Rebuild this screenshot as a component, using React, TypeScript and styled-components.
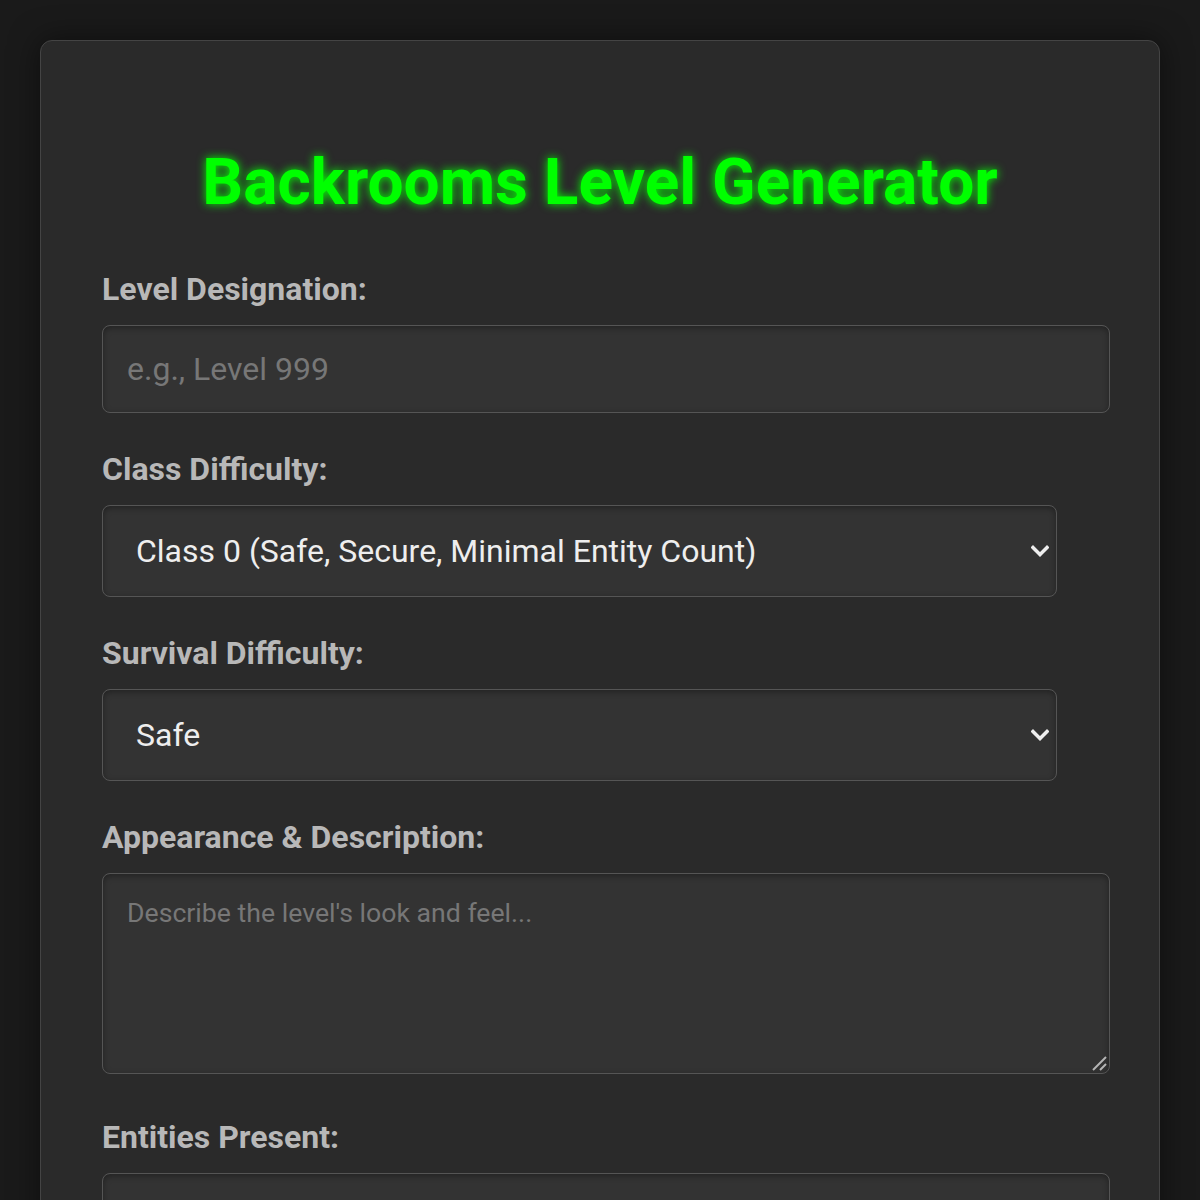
import React from "react";
import styled, { createGlobalStyle } from "styled-components";

const Global = createGlobalStyle`
  html, body {
    margin: 0;
    padding: 0;
    background: #1a1a1a;
    font-family: Roboto, "Liberation Sans", Arial, sans-serif;
  }
  * { box-sizing: border-box; }
`;

const Page = styled.div`
  padding: 40px;
  min-height: 1200px;
`;

const Panel = styled.div`
  background: #2a2a2a;
  border: 1px solid #444;
  border-radius: 12px;
  padding: 61px 61px 80px;
  box-shadow: 0 0 30px rgba(0, 0, 0, 0.5);
  display: flex;
  flex-direction: column;
`;

const Title = styled.h1`
  margin: 43px 0 51px;
  font-size: 64px;
  font-weight: 700;
  line-height: 75px;
  text-align: center;
  color: #00ff00;
  text-shadow: 0 0 10px #00ff00;
`;

const Group = styled.div`
  display: flex;
  flex-direction: column;
  align-items: flex-start;
  margin-bottom: 38px;
`;

const Label = styled.label`
  display: block;
  font-size: 32px;
  line-height: 37px;
  font-weight: 700;
  color: #b8b8b8;
  margin-bottom: 17px;
`;

const fieldBase = `
  background: #333;
  border: 1px solid #555;
  border-radius: 8px;
  color: #eee;
  font-family: Roboto, "Liberation Sans", Arial, sans-serif;
  box-shadow: inset 0 2px 6px rgba(0, 0, 0, 0.35);
  outline: none;
  &::placeholder { color: #777; }
`;

const TextInput = styled.input`
  ${fieldBase}
  width: 1008px;
  height: 88px;
  padding: 0 24px;
  font-size: 32px;
`;

const SelectWrap = styled.div`
  position: relative;
  width: 955px;
`;

const Select = styled.select`
  ${fieldBase}
  appearance: none;
  -webkit-appearance: none;
  display: block;
  width: 100%;
  height: 92px;
  padding: 0 60px 0 33px;
  font-size: 32px;
`;

const Chevron = styled.svg`
  position: absolute;
  right: 8px;
  top: 50%;
  width: 18px;
  height: 12px;
  margin-top: -6px;
  pointer-events: none;
`;

const AreaWrap = styled.div`
  position: relative;
  width: 1008px;
  margin-bottom: 7px;
`;

const TextArea = styled.textarea`
  ${fieldBase}
  display: block;
  width: 100%;
  height: 201px;
  padding: 23px 24px;
  font-size: 26.67px;
  resize: none;
`;

const Grip = styled.svg`
  position: absolute;
  right: 2px;
  bottom: 2px;
  width: 16px;
  height: 16px;
  pointer-events: none;
`;

function Dropdown({ id, value, options }: { id: string; value: string; options: string[] }) {
  return (
    <SelectWrap>
      <Select id={id} defaultValue={value}>
        {options.map((o) => (
          <option key={o} value={o}>
            {o}
          </option>
        ))}
      </Select>
      <Chevron viewBox="0 0 18 12">
        <polyline points="2,2.5 9,9.5 16,2.5" fill="none" stroke="#eeeeee" strokeWidth="3.4" strokeLinecap="square" />
      </Chevron>
    </SelectWrap>
  );
}

export default function App() {
  return (
    <>
      <Global />
      <Page>
        <Panel>
          <Title>Backrooms Level Generator</Title>
          <Group>
            <Label htmlFor="lvl">Level Designation:</Label>
            <TextInput id="lvl" placeholder="e.g., Level 999" />
          </Group>
          <Group>
            <Label htmlFor="cls">Class Difficulty:</Label>
            <Dropdown
              id="cls"
              value="Class 0 (Safe, Secure, Minimal Entity Count)"
              options={[
                "Class 0 (Safe, Secure, Minimal Entity Count)",
                "Class 1 (Safe, Secure, Low Entity Count)",
                "Class 2 (Unsafe, Secure, Low Entity Count)",
                "Class 3 (Unsafe, Unsecure, Medium Entity Count)",
                "Class 4 (Unsafe, Unsecure, High Entity Count)",
                "Class 5 (Deadzone)",
              ]}
            />
          </Group>
          <Group>
            <Label htmlFor="surv">Survival Difficulty:</Label>
            <Dropdown id="surv" value="Safe" options={["Safe", "Unsafe", "Deadly"]} />
          </Group>
          <Group>
            <Label htmlFor="desc">Appearance &amp; Description:</Label>
            <AreaWrap>
              <TextArea id="desc" placeholder="Describe the level's look and feel..." />
              <Grip viewBox="0 0 16 16">
                <line x1="1" y1="14" x2="14" y2="1" stroke="#b5b5b5" strokeWidth="2" />
                <line x1="8" y1="14" x2="14" y2="8" stroke="#b5b5b5" strokeWidth="2" />
              </Grip>
            </AreaWrap>
          </Group>
          <Group>
            <Label htmlFor="ent">Entities Present:</Label>
            <TextInput id="ent" placeholder="e.g., Smilers, Hounds" />
          </Group>
        </Panel>
      </Page>
    </>
  );
}
